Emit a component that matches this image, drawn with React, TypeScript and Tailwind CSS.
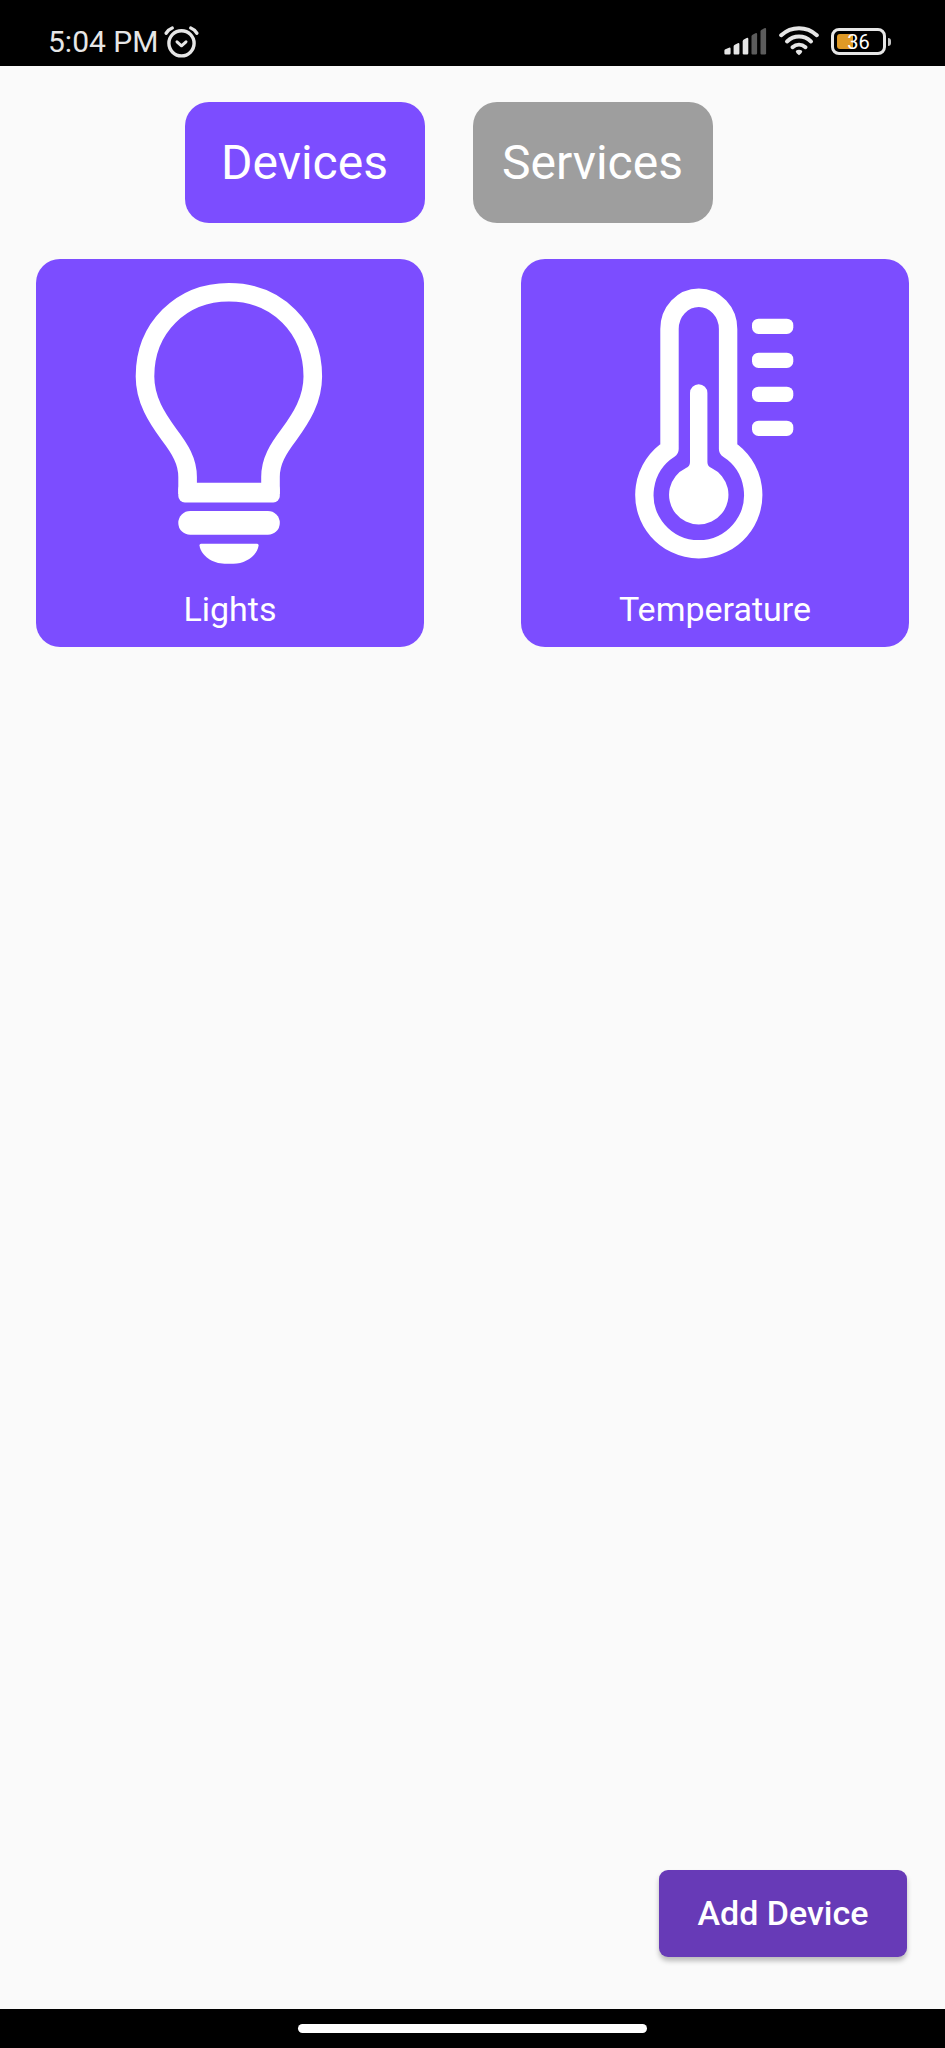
import type { ReactNode } from 'react';

function AlarmIcon() {
  return (
    <svg className="h-8 w-9" viewBox="0 0 36 32" fill="none" stroke="#e6e6e6" strokeLinecap="round" aria-hidden="true">
      <circle cx="17.5" cy="17.3" r="12.6" strokeWidth="3.4" />
      <path d="M13 15.800l4.500 4 4.500-4" strokeWidth="3" strokeLinejoin="round" />
      <path d="M2.200 7.200Q4.400 3.400 8.200 2M32.800 7.200Q30.600 3.400 26.800 2" strokeWidth="3.400" />
    </svg>
  );
}

function SignalIcon() {
  return (
    <svg className="h-8 w-[43px]" viewBox="0 0 43 32" fill="#e6e6e6" aria-hidden="true">
      <path d="M1.500 28.500Q.4 28.500.4 27.400V24.500Q.4 23.600 1.400 23.200L5 21.700Q6.600 21.200 6.600 22.700V27.200Q6.600 28.500 5.300 28.500Z" />
      <path d="M10.500 28.500Q9.600 28.500 9.600 27.400V20.500Q9.600 19.300 10.800 18.700L13.800 17.200Q15.400 16.600 15.400 18.200V27.200Q15.400 28.500 14.200 28.500Z" />
      <path d="M19.800 28.500Q18.700 28.500 18.700 27.400V15.400Q18.700 14.200 19.800 13.500L22.600 12Q24.300 11.400 24.300 13V27.200Q24.300 28.500 23 28.500Z" />
      <path fill="#5c5c5c" d="M28.600 28.500Q27.500 28.500 27.500 27.400V10.600Q27.500 9.400 28.600 8.700L31.400 7.200Q33.100 6.600 33.100 8.200V27.200Q33.100 28.500 31.800 28.500Z" />
      <path fill="#5c5c5c" d="M37.600 28.500Q36.500 28.500 36.500 27.400V5.600Q36.500 4.400 37.600 3.700L40.400 2.200Q42.100 1.600 42.100 3.200V27.200Q42.100 28.500 40.800 28.500Z" />
    </svg>
  );
}

function WifiIcon() {
  return (
    <svg className="h-8 w-10" viewBox="0 0 40 32" fill="none" stroke="#e6e6e6" strokeWidth="4" strokeLinecap="round" aria-hidden="true">
      <path d="M2.200 9.200C12.500-.1 27.500-.1 37.800 9.200" />
      <path d="M8 15.400C15 9 25 9 32 15.400" />
      <path d="M13.500 21.200C17.400 17.800 22.600 17.800 26.500 21.200" />
      <path d="M20 23.800Q23.200 23.800 23.200 25.800Q22.600 27.400 20 29.200Q17.400 27.400 16.800 25.800Q16.800 23.800 20 23.800Z" fill="#e6e6e6" stroke="none" />
    </svg>
  );
}

function Battery() {
  return (
    <div className="flex items-center gap-0.5" role="img" aria-label="Battery 36 percent">
      <div className="relative flex h-[27px] w-[55px] items-center justify-center rounded-lg border-3 border-[#e6e6e6]">
        <div className="absolute inset-y-[3px] left-[3px] w-4 rounded-l-[3px] bg-[#e09a26]" />
        <span className="relative text-[20px] leading-5 text-white">36</span>
      </div>
      <div className="h-2 w-[3px] rounded-r-sm bg-[#c4c4c4]" />
    </div>
  );
}

function StatusBar() {
  return (
    <header className="flex h-[66px] items-center justify-between bg-black pt-[17px] pr-[54px] pl-12">
      <div className="flex items-center gap-1.5 text-[30px] leading-8 text-[#e6e6e6]">
        <span>5:04 PM</span>
        <AlarmIcon />
      </div>
      <div className="flex items-center gap-3">
        <SignalIcon />
        <WifiIcon />
        <Battery />
      </div>
    </header>
  );
}

function BulbIcon() {
  return (
    <svg className="w-full" viewBox="0 0 388 312" fill="white" aria-hidden="true">
      <path
        d="M151.600 235V218C151.600 202 144 190 133 175.500C121 159 109 141 109 117.400C109 69 145 33.300 193 33.300S276.800 69 276.800 117.400C276.800 141 265 159 253 175.500C242 190 234.500 202 234.500 218V235"
        fill="none"
        stroke="white"
        strokeWidth="18.600"
      />
      <rect x="142.300" y="223.800" width="101.500" height="19.600" rx="6.500" />
      <rect x="142.300" y="252" width="101.500" height="23.800" rx="11.900" />
      <path d="M165 284.700H221.200Q222.700 284.700 222.600 286.500C221 297 209 304.700 197.500 304.700H188.500C177 304.700 165 297 163.500 286.500Q163.400 284.700 165 284.700Z" />
    </svg>
  );
}

const TICKS = [59.7, 93.7, 127.7, 161.7];

function ThermometerIcon() {
  return (
    <svg className="w-full" viewBox="0 0 388 312" fill="white" aria-hidden="true">
      <path
        d="M148.500 190V70A29.300 31.300 0 0 1 207.100 70V190A54.400 54.400 0 1 1 148.500 190Z"
        fill="none"
        stroke="white"
        strokeWidth="18.400"
        strokeLinejoin="round"
      />
      <path d="M169 134A8.700 8.700 0 0 1 186.400 134V203Q186.400 207.500 190.500 209A29.700 29.700 0 1 1 165 209Q169 207.500 169 203Z" />
      {TICKS.map((y) => (
        <rect key={y} x="231" y={y} width="41.300" height="15.300" rx="6.500" />
      ))}
    </svg>
  );
}

function DeviceCard({ label, icon }: { label: string; icon: ReactNode }) {
  return (
    <button type="button" className="flex aspect-square flex-col items-center rounded-3xl bg-[#7c4dff] text-white">
      {icon}
      <span className="mt-[18px] text-[34px] leading-10">{label}</span>
    </button>
  );
}

export default function App() {
  return (
    <div className="flex min-h-screen flex-col bg-[#fafafa] font-[Roboto,sans-serif]">
      <StatusBar />
      <main className="flex flex-1 flex-col px-9 pt-9">
        <nav className="flex justify-center text-[48px] leading-none text-white">
          <button type="button" aria-pressed="true" className="mr-12 h-[121px] w-60 rounded-3xl bg-[#7c4dff]">
            Devices
          </button>
          <button type="button" aria-pressed="false" className="mr-12 h-[121px] w-60 rounded-3xl bg-[#9e9e9e]">
            Services
          </button>
        </nav>
        <section className="mt-9 grid grid-cols-2 gap-[97px]" aria-label="Devices">
          <DeviceCard label="Lights" icon={<BulbIcon />} />
          <DeviceCard label="Temperature" icon={<ThermometerIcon />} />
        </section>
        <div className="mt-auto flex justify-end pr-0.5 pb-[52px]">
          <button
            type="button"
            className="h-[87px] w-[248px] rounded-[9px] bg-[#673ab7] text-[34px] font-medium text-white shadow-[0_4px_5px_rgba(0,0,0,0.25)]"
          >
            Add Device
          </button>
        </div>
      </main>
      <footer className="flex h-[39px] items-center justify-center bg-black">
        <div className="h-[9px] w-[37%] rounded-full bg-white" />
      </footer>
    </div>
  );
}
